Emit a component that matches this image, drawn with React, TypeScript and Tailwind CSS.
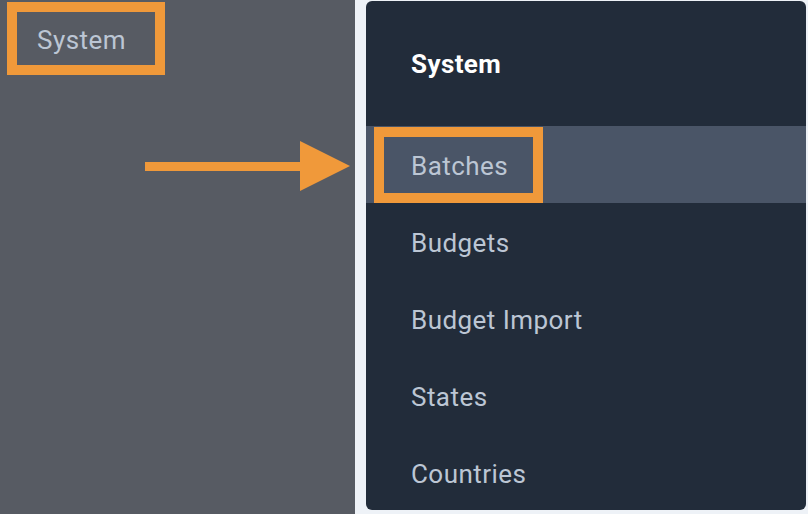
const items = ['Batches', 'Budgets', 'Budget Import', 'States', 'Countries'];

export default function App() {
  return (
    <div
      className="flex h-[514px] w-[808px] overflow-hidden bg-[#eef2f7]"
      style={{ fontFamily: 'Roboto, "Liberation Sans", sans-serif' }}
    >
      {/* left sidebar */}
      <div className="flex h-full w-[355px] shrink-0 flex-col bg-[#575b63]">
        <div className="ml-[7px] mt-[2px] flex h-[73px] w-[158px] items-center border-[10px] border-[#f0993a] pl-[20px] pt-[3px]">
          <span className="text-[26px] leading-none tracking-[0.45px] text-[#bcc6d4]">System</span>
        </div>
        <div className="ml-[145px] mt-[66px] flex items-center">
          <div className="h-[9px] w-[156px] bg-[#f0993a]" />
          <svg width="50" height="50" viewBox="0 0 50 50" className="-ml-[1px]">
            <polygon points="0,0 50,25 0,50" fill="#f0993a" />
          </svg>
        </div>
      </div>

      {/* menu panel */}
      <div className="ml-[11px] mt-[1px] h-[509px] w-[440px] shrink-0 overflow-hidden rounded-[6px] bg-[#222c3a]">
        <div className="flex h-[125px] items-center pl-[45px] pt-[1px]">
          <span className="text-[26px] font-bold leading-none tracking-[0.4px] text-white">System</span>
        </div>
        {items.map((item, i) => (
          <div
            key={item}
            className={
              i === 0
                ? 'relative flex h-[77px] items-center bg-[#4a5567] pl-[45px] pt-[3px]'
                : 'flex h-[77px] items-center pl-[45px] pt-[3px]'
            }
          >
            {i === 0 && (
              <div className="absolute left-[8px] top-[1px] h-[76px] w-[169px] border-[10px] border-[#f0993a]" />
            )}
            <span className="relative text-[26px] leading-none tracking-[0.45px] text-[#bcc6d4]">{item}</span>
          </div>
        ))}
      </div>
    </div>
  );
}
